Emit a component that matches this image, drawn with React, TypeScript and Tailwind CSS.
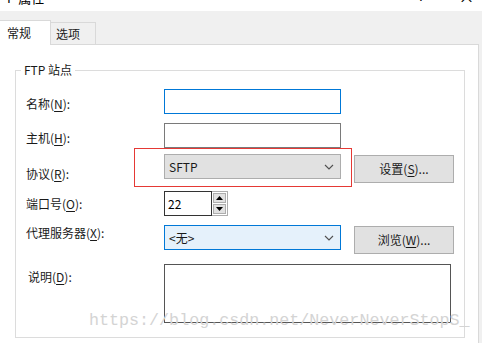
const font = { fontFamily: '"Noto Sans CJK SC", "Microsoft YaHei", sans-serif' };

function Chevron() {
  return (
    <svg width="10" height="6" viewBox="0 0 10 6" className="shrink-0">
      <path d="M1 1 L5 5 L9 1" fill="none" stroke="#505050" strokeWidth="1.1" />
    </svg>
  );
}

function Label({ text, mt, ml = 0 }: { text: React.ReactNode; mt: string; ml?: number }) {
  return (
    <div className={`w-[138px] shrink-0 text-[12px] leading-4 text-[#1a1a1a] ${mt}`} style={{ paddingLeft: ml }}>
      {text}
    </div>
  );
}

function U({ c }: { c: string }) {
  return <span className="underline underline-offset-2">{c}</span>;
}

function Button({ children, className = "" }: { children: React.ReactNode; className?: string }) {
  return (
    <div className={`ml-[13px] flex h-[28px] w-[100px] items-center justify-center border border-[#adadad] bg-[#e1e1e1] text-[12px] text-[#1a1a1a] ${className}`}>
      {children}
    </div>
  );
}

export default function App() {
  return (
    <div className="relative h-[343px] w-[482px] overflow-hidden bg-[#f0f0f0]" style={font}>
      {/* title strip, mostly cut off */}
      <div className="flex h-[11px] items-start overflow-hidden bg-white">
        <span className="-mt-[10px] ml-[7px] text-[13px] leading-4 text-black">P 属性</span>
        <span className="-mt-[12px] ml-[375px] text-[12px] leading-4 text-black">.</span>
        <span className="-mt-[12px] ml-[36px] text-[16px] leading-4 text-black">×</span>
      </div>

      {/* tabs */}
      <div className="flex h-[33px] items-end">
        <div className="z-10 -mb-px flex h-[25px] w-[51px] items-center border-r border-t border-[#d9d9d9] bg-white pl-[7px] text-[12px] text-[#1a1a1a]">
          常规
        </div>
        <div className="flex h-[22px] w-[45px] items-center border-r border-t border-[#d9d9d9] bg-[#f0f0f0] pl-[5px] text-[12px] text-[#1a1a1a]">
          选项
        </div>
      </div>

      {/* panel */}
      <div className="h-[299px] w-[479px] border-r border-t border-[#d9d9d9] bg-white pl-[15px] pt-[25px]">
        <div className="relative h-[268px] w-[450px] border border-[#dcdcdc] pl-[10px]">
          <div className="absolute -top-[9px] left-[5px] bg-white px-[3px] text-[12px] leading-4 text-[#1a1a1a]">
            FTP 站点
          </div>

          {/* name */}
          <div className="mt-[18px] flex items-start">
            <Label text={<>名称(<U c="N" />):</>} mt="mt-[7px]" />
            <div className="h-[25px] w-[177px] border border-[#0078d7] bg-white" />
          </div>

          {/* host */}
          <div className="mt-[9px] flex items-start">
            <Label text={<>主机(<U c="H" />):</>} mt="mt-[7px]" />
            <div className="h-[25px] w-[177px] border border-[#7a7a7a] bg-white" />
          </div>

          {/* protocol */}
          <div className="mt-[6px] flex items-start">
            <Label text={<>协议(<U c="R" />):</>} mt="mt-[12px]" />
            <div className="flex h-[25px] w-[177px] items-center justify-between border border-[#adadad] bg-[#e1e1e1] pl-[4px] pr-[6px] text-[12px] text-[#1a1a1a]">
              <span>SFTP</span>
              <Chevron />
            </div>
            <Button className="mt-px">
              设置(<U c="S" />)...
            </Button>
          </div>

          {/* port */}
          <div className="mt-[8px] flex items-start">
            <Label text={<>端口号(<U c="O" />):</>} mt="mt-[5px]" />
            <div className="flex h-[25px] w-[48px] items-center border border-[#333] bg-white pl-[3px] text-[12px] text-black">
              22
            </div>
            <div className="flex h-[25px] w-[16px] flex-col border border-l-0 border-[#adadad] bg-white">
              <div className="m-px flex flex-1 items-center justify-center border border-[#adadad] bg-[#e1e1e1]">
                <svg width="7" height="4" viewBox="0 0 7 4"><path d="M0 4 L3.5 0 L7 4 Z" fill="#000" /></svg>
              </div>
              <div className="mx-px mb-px flex flex-1 items-center justify-center border border-[#adadad] bg-[#e1e1e1]">
                <svg width="7" height="4" viewBox="0 0 7 4"><path d="M0 0 L3.5 4 L7 0 Z" fill="#000" /></svg>
              </div>
            </div>
          </div>

          {/* proxy */}
          <div className="mt-[9px] flex items-start">
            <Label text={<>代理服务器(<U c="X" />):</>} mt="mt-0" />
            <div className="flex h-[25px] w-[177px] items-center justify-between border border-[#0078d7] bg-[#e5f1fb] pl-[4px] pr-[6px] text-[12px] text-[#1a1a1a]">
              <span>&lt;无&gt;</span>
              <Chevron />
            </div>
            <Button className="mt-px h-[27px]">
              浏览(<U c="W" />)...
            </Button>
          </div>

          {/* description */}
          <div className="mt-[10px] flex items-start">
            <Label text={<>说明(<U c="D" />):</>} mt="mt-[5px]" ml={2} />
            <div className="h-[59px] w-[287px] border border-[#555] bg-white" />
          </div>
        </div>
      </div>

      {/* red highlight */}
      <div className="absolute left-[134px] top-[148px] h-[39px] w-[218px] border border-[#e53935]" />

      {/* watermark */}
      <div
        className="absolute left-[89px] top-[309px] text-[16.7px] leading-6 text-[#d4d4d4]"
        style={{ fontFamily: '"Liberation Mono", "DejaVu Sans Mono", monospace' }}
      >
        https://blog.csdn.net/NeverNeverStopS_
      </div>
    </div>
  );
}
